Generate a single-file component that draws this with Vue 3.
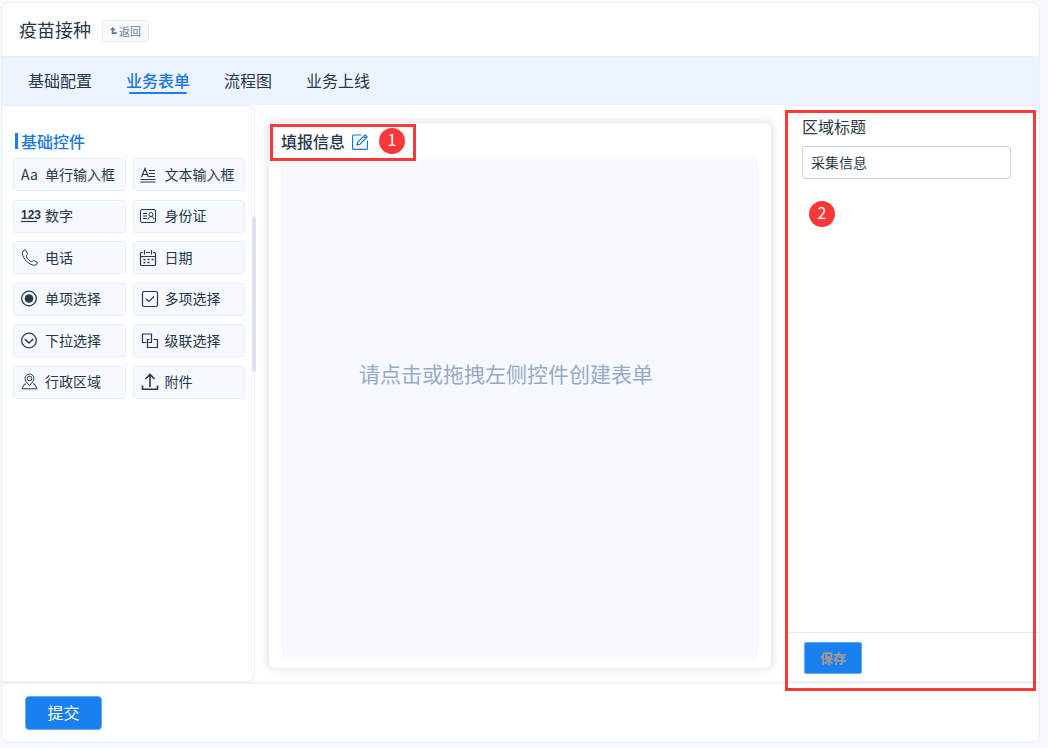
<script setup>
import { ref } from 'vue'

const tabs = ['基础配置', '业务表单', '流程图', '业务上线']
const activeTab = ref('业务表单')

const controls = [
  { label: '单行输入框', icon: 'text' },
  { label: '文本输入框', icon: 'textarea' },
  { label: '数字', icon: 'number' },
  { label: '身份证', icon: 'idcard' },
  { label: '电话', icon: 'phone' },
  { label: '日期', icon: 'date' },
  { label: '单项选择', icon: 'radio' },
  { label: '多项选择', icon: 'checkbox' },
  { label: '下拉选择', icon: 'select' },
  { label: '级联选择', icon: 'cascade' },
  { label: '行政区域', icon: 'region' },
  { label: '附件', icon: 'upload' }
]

const areaTitle = ref('采集信息')
</script>

<template>
  <div class="page">
    <div class="shell">
      <header class="page-header">
        <h1 class="page-title">疫苗接种</h1>
        <button type="button" class="back-button">
          <svg class="back-icon" viewBox="0 0 8 8">
            <path d="M3 0L6.500 3.500H4.300V6H8V8H2V3.500H0Z" fill="currentColor" />
          </svg>
          <span>返回</span>
        </button>
      </header>

      <nav class="tabs">
        <a
          v-for="tab in tabs"
          :key="tab"
          href="#"
          class="tab"
          :class="{ active: tab === activeTab }"
          @click.prevent="activeTab = tab"
        >{{ tab }}</a>
      </nav>

      <main class="workspace">
        <aside class="palette">
          <h2 class="palette-title">基础控件</h2>
          <div class="control-grid">
            <button v-for="item in controls" :key="item.label" type="button" class="control">
              <svg class="control-icon" viewBox="0 0 18 18">
                <text v-if="item.icon === 'text'" x="0" y="14" class="icon-text">Aa</text>
                <g v-else-if="item.icon === 'textarea'">
                  <path d="M0.500 11L4 2.500L7.500 11M1.800 8.500H6.200M8 4.500H14M8 7.500H14M8 10.500H14M-0.500 13.500H14.500M-0.500 16H14.500" />
                </g>
                <g v-else-if="item.icon === 'number'">
                  <text x="0" y="12" class="icon-number">123</text>
                  <path d="M0 14.500H16" />
                </g>
                <g v-else-if="item.icon === 'idcard'" class="thin">
                  <rect x="-0.500" y="2.500" width="15" height="13" rx="1.500" />
                  <path d="M2 6.500H6M2 9H6M2 11.500H6M7 12.500C7.500 8.500 12.500 8.500 13 12.500" />
                  <circle cx="10" cy="7.500" r="2" />
                </g>
                <g v-else-if="item.icon === 'phone'" class="thin">
                  <path d="M4.200 0.800Q5.200 1.500 6.300 4.200Q6.700 5.500 5.500 6.200Q4.900 6.800 5.500 8Q7.300 11.200 9.800 12.600Q10.800 13 11.500 12.200Q12.300 11.200 13.400 11.800L16.500 13.500Q16.500 15.800 13.500 16.300C8 16 2 10 1.300 4.500Q1.300 1 4.200 0.800Z" />
                </g>
                <g v-else-if="item.icon === 'date'">
                  <path d="M2 3.500H0.500Q-0.500 3.500 -0.500 4.500V15.500Q-0.500 16.500 0.500 16.500H13.500Q14.500 16.500 14.500 15.500V4.500Q14.500 3.500 13.500 3.500H12M5 3.500H9M3.500 1V5.500M10.500 1V5.500M-0.500 7.500H14.500" />
                  <path d="M2.500 10.500H4.500M6.500 10.500H8.500M10.500 10.500H12.500M2.500 13.500H4.500M6.500 13.500H8.500" stroke-width="1.600" />
                </g>
                <g v-else-if="item.icon === 'radio'">
                  <circle cx="8" cy="8.500" r="7.300" />
                  <circle cx="8" cy="8.500" r="4.300" fill="currentColor" stroke="none" />
                </g>
                <g v-else-if="item.icon === 'checkbox'">
                  <rect x="1.500" y="1.500" width="15" height="15" rx="1.500" />
                  <path d="M5 9L8 11.500L13 6.500" />
                </g>
                <g v-else-if="item.icon === 'select'">
                  <circle cx="8" cy="8.500" r="7.300" />
                  <path d="M3.800 7L8 11L12.200 7" stroke-width="1.500" />
                </g>
                <g v-else-if="item.icon === 'cascade'">
                  <path d="M5.500 10.500H1.500V2H10.500V6M8.500 7.500H6.500V15.500H16.500V7.500H12.500M10.500 5V10.500H7.500" />
                </g>
                <g v-else-if="item.icon === 'region'" class="thin">
                  <path d="M8.500 12.500Q4 8.500 4 5.500A4.500 4.500 0 0 1 13 5.500Q13 8.500 8.500 12.500ZM5 11H3.500L1 15.800H16L13.500 11H12" />
                  <circle cx="8.500" cy="5.500" r="2.300" />
                </g>
                <g v-else stroke-width="1.600">
                  <path d="M9 14V1.500M4.500 6L9 1.500L13.500 6M1.500 12.500V16.300H16.500V12.500" />
                </g>
              </svg>
              <span class="control-label">{{ item.label }}</span>
            </button>
          </div>
          <div class="scroll-thumb"></div>
        </aside>

        <section class="stage">
          <div class="form-card">
            <div class="form-head">
              <h2 class="form-title">填报信息</h2>
              <button type="button" class="edit-button" aria-label="编辑">
                <svg class="edit-icon" viewBox="0 0 16 16">
                  <path d="M9.500 1H1.500Q0.600 1 0.600 2V14.400Q0.600 15.400 1.600 15.400H14.400Q15.400 15.400 15.400 14.400V6.500" />
                  <path d="M5 11L5.600 8.200L13 0.900L15.100 3L7.700 10.400ZM11.500 2.400L13.600 4.500" />
                </svg>
              </button>
              <span class="marker">1</span>
              <div class="outline outline-title"></div>
            </div>
            <div class="canvas">
              <p class="canvas-hint">请点击或拖拽左侧控件创建表单</p>
            </div>
          </div>
        </section>

        <aside class="settings">
          <div class="settings-body">
            <label for="area-title" class="field-label">区域标题</label>
            <input id="area-title" v-model="areaTitle" type="text" class="field-input">
            <span class="marker marker-settings">2</span>
          </div>
          <div class="settings-footer">
            <button type="button" class="save-button">保存</button>
          </div>
          <div class="outline outline-settings"></div>
        </aside>
      </main>

      <footer class="page-footer">
        <button type="button" class="submit-button">提交</button>
      </footer>
    </div>
  </div>
</template>

<style>
body {
  margin: 0;
  background: #f7faff;
}
</style>

<style scoped>
.page {
  box-sizing: border-box;
  display: flex;
  min-height: 100vh;
  padding: 2px 8px 5px 1px;
  font-family: "Noto Sans CJK SC", sans-serif;
  color: #273849;
}

.page *,
.page *::before,
.page *::after {
  box-sizing: border-box;
}

button,
input {
  font-family: inherit;
  color: inherit;
}

button {
  cursor: pointer;
}

h1,
h2,
p {
  margin: 0;
}

.shell {
  flex: 1;
  min-width: 0;
  display: flex;
  flex-direction: column;
  background: #fff;
  border: 1px solid #e6eefa;
  border-radius: 8px;
}

.page-header {
  display: flex;
  align-items: center;
  gap: 11px;
  height: 54px;
  padding: 0 17px;
  border-bottom: 1px solid #e6eefa;
}

.page-title {
  padding-bottom: 2px;
  font-size: 18px;
  font-weight: 400;
  line-height: 24px;
}

.back-button {
  display: flex;
  align-items: center;
  gap: 2px;
  height: 22px;
  margin-top: 2px;
  padding: 0 7px;
  background: #f8fafd;
  border: 1px solid #e6ebf7;
  border-radius: 3px;
  color: #6478a4;
  font-size: 11px;
  line-height: 16px;
}

.back-icon {
  width: 7px;
  height: 7px;
}

.tabs {
  display: flex;
  align-items: center;
  gap: 34px;
  height: 48px;
  padding: 0 26px 2px;
  background: #edf4ff;
}

.tab {
  position: relative;
  color: #273849;
  font-size: 16px;
  line-height: 24px;
  text-decoration: none;
}

.tab.active {
  color: #1a78dc;
  font-weight: 500;
}

.tab.active::after {
  content: "";
  position: absolute;
  right: 3px;
  bottom: -2px;
  left: 3px;
  height: 2px;
  background: #1880ef;
  border-radius: 1px;
}

.workspace {
  flex: 1;
  display: grid;
  grid-template-columns: 253px minmax(0, 1fr) 254px;
}

.palette {
  position: relative;
  padding: 23px 9px 24px 11px;
  border: 1px solid #e6eefa;
  border-left: 0;
  border-radius: 0 8px 8px 0;
}

.palette-title {
  display: flex;
  align-items: center;
  gap: 3px;
  margin-left: 2px;
  color: #1a78dc;
  font-size: 16px;
  font-weight: 500;
  line-height: 24px;
}

.palette-title::before {
  content: "";
  width: 3px;
  height: 16px;
  background: #1880ef;
}

.control-grid {
  display: grid;
  grid-template-columns: 1fr 1fr;
  grid-auto-rows: 33px;
  column-gap: 7px;
  align-content: space-between;
  height: 241px;
  margin-top: 5px;
}

.control {
  display: flex;
  align-items: center;
  gap: 6px;
  padding: 0 7px;
  background: #f6f9ff;
  border: 1px solid #e7effc;
  border-radius: 3px;
  font-size: 14px;
  line-height: 20px;
  white-space: nowrap;
}

.control-label {
  padding-bottom: 2px;
}

.control-icon {
  flex-shrink: 0;
  width: 18px;
  height: 18px;
  overflow: visible;
  fill: none;
  stroke: currentColor;
  stroke-width: 1.2;
}

.thin {
  stroke-width: 1;
}

.icon-text,
.icon-number {
  fill: currentColor;
  stroke: none;
  font-size: 14px;
}

.icon-number {
  font-family: "Liberation Sans Narrow", "Liberation Sans", sans-serif;
  font-size: 12px;
  font-weight: 700;
}

.scroll-thumb {
  position: absolute;
  top: 110px;
  right: -2px;
  width: 4px;
  height: 156px;
  background: #dde4ef;
  border-radius: 2px;
}

.stage {
  display: flex;
  padding: 17px 13px 13px;
}

.form-card {
  flex: 1;
  min-width: 0;
  display: flex;
  flex-direction: column;
  padding: 0 12px 10px;
  background: #fff;
  border: 1px solid #e6eefa;
  border-radius: 6px;
  box-shadow: 0 0 10px rgba(40, 70, 110, 0.16);
}

.form-head {
  position: relative;
  display: flex;
  align-items: center;
  height: 35px;
}

.form-title {
  font-size: 16px;
  font-weight: 500;
  line-height: 24px;
}

.edit-button {
  display: flex;
  margin-left: 7px;
  padding: 2px 0 0;
  background: none;
  border: 0;
  color: #1a78dc;
}

.edit-icon {
  width: 16px;
  height: 16px;
  overflow: visible;
  fill: none;
  stroke: currentColor;
  stroke-width: 1.2;
}

.marker {
  width: 26px;
  height: 26px;
  margin-left: 11px;
  background: #fb3838;
  border-radius: 50%;
  color: #fff;
  font-size: 16px;
  line-height: 23px;
  text-align: center;
}

.outline {
  position: absolute;
  border: 3px solid #fb3838;
  pointer-events: none;
}

.outline-title {
  top: 1px;
  left: -11px;
  width: 146px;
  height: 37px;
}

.canvas {
  flex: 1;
  display: flex;
  flex-direction: column;
  align-items: center;
  padding-top: 199px;
  background: #f6f9ff;
  border-radius: 6px;
}

.canvas-hint {
  padding-right: 28px;
  color: #98abc4;
  font-size: 21px;
  line-height: 32px;
}

.settings {
  position: relative;
  display: flex;
  flex-direction: column;
  border: 1px solid #e6eefa;
  border-width: 1px 0 1px 1px;
  border-radius: 8px 0 0 8px;
}

.settings-body {
  flex: 1;
  display: flex;
  flex-direction: column;
  align-items: flex-start;
  padding: 8px 28px 8px 16px;
}

.field-label {
  font-size: 16px;
  line-height: 24px;
}

.field-input {
  width: 100%;
  height: 33px;
  margin-top: 8px;
  padding: 0 8px 2px;
  background: #fff;
  border: 1px solid #c5cede;
  border-radius: 3px;
  font-size: 14px;
  outline: none;
}

.marker-settings {
  margin-top: 22px;
  margin-left: 7px;
}

.settings-footer {
  padding: 9px 18px 7px;
  border-top: 1px solid #dfe7f2;
}

.save-button {
  display: block;
  width: 58px;
  height: 32px;
  padding: 0 0 1px;
  background: #1880ef;
  border: 1px solid #62adfa;
  border-radius: 2px;
  color: #999;
  font-size: 13px;
  font-weight: 900;
}

.outline-settings {
  top: 4px;
  right: 3px;
  bottom: -10px;
  left: -1px;
}

.page-footer {
  padding: 12px 23px;
  border-top: 2px solid #edf2fb;
}

.submit-button {
  display: block;
  width: 77px;
  height: 34px;
  padding: 0 0 2px;
  background: #1880ef;
  border: 1px solid #62adfa;
  border-radius: 4px;
  color: #fff;
  font-size: 16px;
}
</style>
